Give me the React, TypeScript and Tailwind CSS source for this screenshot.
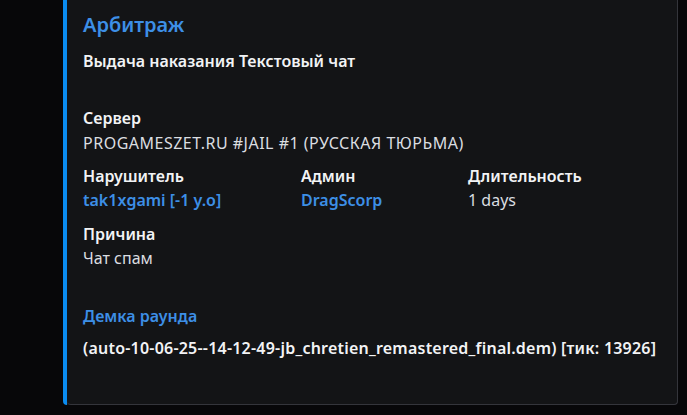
export default function App() {
  const font = { fontFamily: '"Noto Sans", "Open Sans", sans-serif' };
  return (
    <div className="w-[687px] h-[415px] bg-[#070709] pl-[63px] overflow-hidden" style={font}>
      <div className="w-[615px] h-[405px] bg-[#131416] border-l-4 border-[#0a8cf0] rounded-b-[4px] relative">
        <div className="absolute inset-0 border-r border-b border-[#34353b] rounded-b-[4px] pointer-events-none" />
        <div className="pl-[16px] pt-[13px] flex flex-col">
          <div className="text-[20px] leading-[24px] font-semibold text-[#3d8fe6]">Арбитраж</div>
          <div className="mt-[14px] text-[16px] leading-[20px] font-semibold text-[#f2f3f5]">
            Выдача наказания Текстовый чат
          </div>

          <div className="mt-[37px] text-[16px] leading-[20px] font-semibold text-[#f2f3f5]">Сервер</div>
          <div className="mt-[5px] text-[16px] leading-[20px] text-[#dbdee1] tracking-[0.5px]">
            PROGAMESZET.RU #JAIL #1 (РУССКАЯ ТЮРЬМА)
          </div>

          <div className="mt-[13px] grid grid-cols-[218px_167px_1fr]">
            {[
              ['Нарушитель', 'tak1xgami [-1 y.o]', true],
              ['Админ', 'DragScorp', true],
              ['Длительность', '1 days', false],
            ].map(([name, value, link]) => (
              <div key={name as string} className="flex flex-col">
                <div className="text-[16px] leading-[20px] font-semibold text-[#f2f3f5]">{name}</div>
                <div
                  className={
                    link
                      ? 'mt-[4px] text-[16px] leading-[20px] font-semibold text-[#3d8fe6]'
                      : 'mt-[4px] text-[16px] leading-[20px] text-[#dbdee1]'
                  }
                >
                  {value}
                </div>
              </div>
            ))}
          </div>

          <div className="mt-[14px] text-[16px] leading-[20px] font-semibold text-[#f2f3f5]">Причина</div>
          <div className="mt-[4px] text-[16px] leading-[20px] text-[#dbdee1]">Чат спам</div>

          <div className="mt-[38px] text-[16px] leading-[20px] font-semibold text-[#3d8fe6]">Демка раунда</div>
          <div className="mt-[12px] text-[16px] leading-[20px] font-semibold text-[#f2f3f5] tracking-[0.22px]">
            (auto-10-06-25--14-12-49-jb_chretien_remastered_final.dem) [тик: 13926]
          </div>
        </div>
      </div>
    </div>
  );
}
